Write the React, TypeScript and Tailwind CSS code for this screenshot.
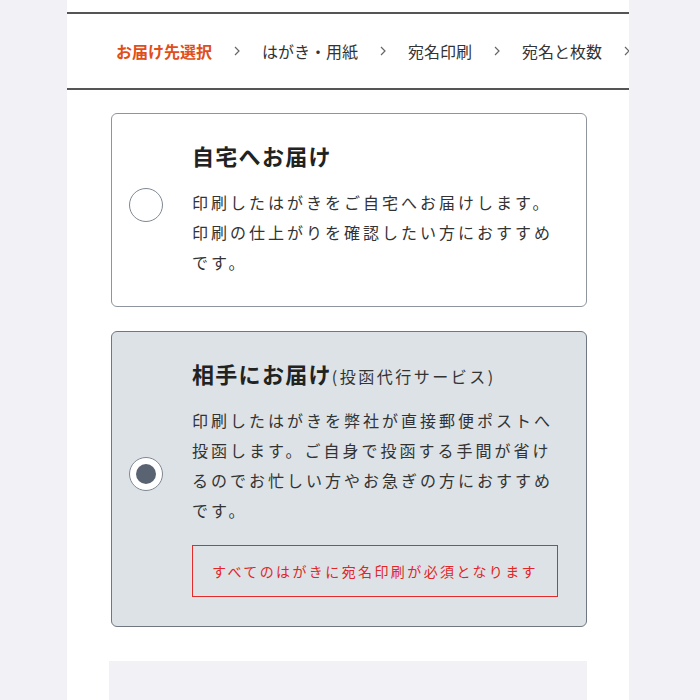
import React, {useState} from "react";

const steps = ["お届け先選択", "はがき・用紙", "宛名印刷", "宛名と枚数"];

const Chevron = () => (
    <svg width="6" height="10" viewBox="0 0 6 10" className="mx-[22px] shrink-0">
        <path d="M1 1l4 4-4 4" fill="none" stroke="#666" strokeWidth="1.2"/>
    </svg>
);

const Radio = ({checked}: {checked: boolean}) => (
    <div
        className="w-[34px] h-[34px] shrink-0 mb-[6px] rounded-full border-[1.5px] border-[#7f8894] bg-white flex items-center justify-center">
        {checked && <div className="w-[20px] h-[20px] rounded-full bg-[#5a6372]"/>}
    </div>
);

const App = () => {
    const [selected, setSelected] = useState<"home" | "direct">("direct");

    return (
        <div className="min-h-screen bg-[#f1f1f6] font-['Noto_Sans_CJK_JP',sans-serif] text-[#333]">
            <div className="ml-[67px] w-[562px] min-h-screen bg-white pt-3">
                <nav
                    className="h-[78px] border-y-2 border-[#555] flex items-center pl-[49px] overflow-hidden whitespace-nowrap text-[16px]">
                    {steps.map((s, i) => (
                        <React.Fragment key={s}>
                            <span className={i === 0 ? "font-bold text-[#df4f1a]" : "text-[#333]"}>{s}</span>
                            <Chevron/>
                        </React.Fragment>
                    ))}
                </nav>

                <div className="pl-[44px] pr-[42px] pt-[23px]">
                    <div
                        onClick={() => setSelected("home")}
                        className={`flex items-center rounded-[6px] border-[1.5px] pl-[17px] pr-[28px] pt-[25px] pb-[29px] cursor-pointer ${
                            selected === "home" ? "bg-[#dce2e6] border-[#6f7781]" : "bg-white border-[#8e959e]"
                        }`}
                    >
                        <Radio checked={selected === "home"}/>
                        <div className="ml-[29px] flex-1">
                            <h2 className="text-[22px] leading-[33px] font-bold tracking-[1.3px] text-[#222]">自宅へお届け</h2>
                            <p className="mt-[15px] text-[16px] leading-[30px] tracking-[3px]">
                                印刷したはがきをご自宅へお届けします。印刷の仕上がりを確認したい方におすすめです。
                            </p>
                        </div>
                    </div>

                    <div
                        onClick={() => setSelected("direct")}
                        className={`mt-[24px] flex items-center rounded-[6px] border-[1.5px] pl-[17px] pr-[28px] pt-[25px] pb-[29px] cursor-pointer ${
                            selected === "direct" ? "bg-[#dce2e6] border-[#6f7781]" : "bg-white border-[#8e959e]"
                        }`}
                    >
                        <Radio checked={selected === "direct"}/>
                        <div className="ml-[29px] flex-1">
                            <h2 className="text-[22px] leading-[33px] font-bold tracking-[1.3px] text-[#222]">
                                相手にお届け
                                <span className="text-[16px] leading-none font-normal tracking-[2.5px] text-[#333]">(投函代行サービス)</span>
                            </h2>
                            <p className="mt-[15px] text-[16px] leading-[30px] tracking-[3px]">
                                印刷したはがきを弊社が直接郵便ポストへ投函します。ご自身で投函する手間が省けるのでお忙しい方やお急ぎの方におすすめです。
                            </p>
                            <div
                                className="mt-[20px] h-[52px] border-[1.5px] border-[#e32b2b] flex items-center justify-center text-[14px] tracking-[2.4px] text-[#e02626]">
                                すべてのはがきに宛名印刷が必須となります
                            </div>
                        </div>
                    </div>

                    <div className="mt-[34px] -ml-[2px] h-[60px] bg-[#f2f2f6]"/>
                </div>
            </div>
        </div>
    );
};

export default App;
